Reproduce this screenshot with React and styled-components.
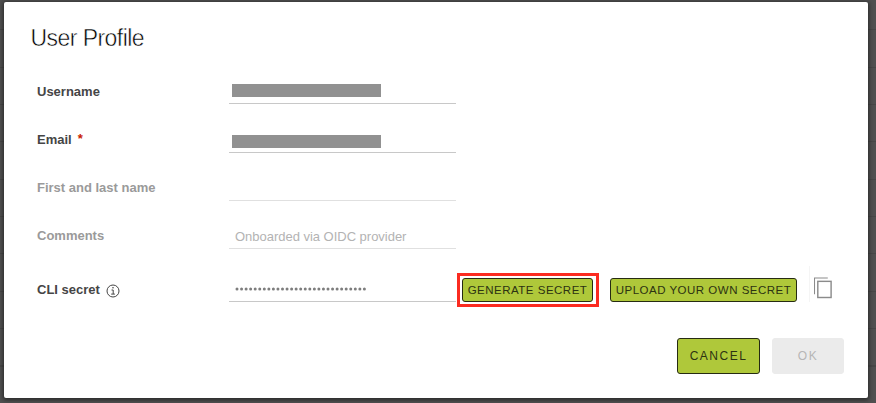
import React from "react";
import styled, { createGlobalStyle } from "styled-components";

const GlobalStyle = createGlobalStyle`
  *, *::before, *::after { box-sizing: border-box; }
  body {
    margin: 0;
    overflow: hidden;
    font-family: "Liberation Sans", Arial, Helvetica, sans-serif;
  }
`;

const Backdrop = styled.div`
  height: 403px;
  padding: 2px 8px 5px 4px;
  background: repeating-linear-gradient(
      to bottom,
      #505050 0 36.3px,
      #474747 36.3px 37.35px
    )
    0 -7px / 100% 500px;
`;

const Dialog = styled.section`
  height: 396px;
  padding: 0 24px 0 25px;
  border-radius: 2px;
  background: #fff;
  box-shadow: 0 1px 4px 1px rgba(0, 0, 0, 0.5);
`;

const Title = styled.h1`
  margin: 0;
  height: 54px;
  padding: 21px 0 0 1.5px;
  font-size: 23px;
  line-height: 30px;
  font-weight: 400;
  letter-spacing: -0.55px;
  white-space: nowrap;
  color: #000;
  -webkit-text-stroke: 0.5px #fff;
`;

const Row = styled.div`
  display: flex;
  align-items: flex-end;
  height: ${(p) => p.$height}px;
`;

const Label = styled.label`
  display: flex;
  align-items: center;
  width: 200px;
  height: 24px;
  padding-left: 8px;
  margin-bottom: ${(p) => p.$lift || 1}px;
  font-size: 13px;
  font-weight: 700;
  white-space: nowrap;
  color: ${(p) => (p.$muted ? "#9a9a9a" : "#454545")};
`;

const Required = styled.span`
  margin: -2px 0 0 6px;
  color: #c92100;
`;

const Field = styled.div`
  display: flex;
  align-items: center;
  width: 227px;
  height: 24px;
  padding: 0 6px;
  border-bottom: 1px solid ${(p) => (p.$muted ? "#e0e0e0" : "#c8c8c8")};
  font-size: 13px;
  letter-spacing: -0.02px;
  white-space: nowrap;
  color: #b3b3b3;
`;

const Redaction = styled.span`
  width: 149px;
  height: 13px;
  margin: ${(p) => p.$top}px 0 0 -3px;
  background: #919191;
`;

const Dots = styled.svg`
  display: block;
  margin-top: -2px;
`;

const InfoIcon = styled.svg`
  margin: 3px 0 0 6px;
`;

const Highlight = styled.div`
  display: flex;
  flex: none;
  width: 142px;
  height: 34px;
  margin: 0 11px -5px 1px;
  padding: 2px;
  border: 3px solid #fb2b20;
`;

const Button = styled.button`
  display: flex;
  flex: none;
  align-items: center;
  justify-content: center;
  width: ${(p) => p.$width}px;
  height: ${(p) => (p.$compact ? 24 : 36)}px;
  padding: 0;
  border: 1px solid #262b12;
  border-radius: 3px;
  background: #afc83a;
  color: #2c3212;
  font-family: inherit;
  font-size: ${(p) => (p.$compact ? 11.5 : 12)}px;
  letter-spacing: ${(p) => p.$spacing}px;
  white-space: nowrap;

  &:disabled {
    border-color: #ebebeb;
    background: #ebebeb;
    color: #b6b6b6;
  }
`;

const CopyButton = styled.button`
  display: flex;
  flex: none;
  width: 24px;
  height: 36px;
  margin-left: 12px;
  padding: 10px 0 0 4px;
  border: 0;
  border-left: 1px solid #f5f5f5;
  background: none;
`;

const Footer = styled.footer`
  display: flex;
  justify-content: flex-end;
  gap: 12px;
  margin-top: 36px;
`;

const dotCount = 29;

export default function App() {
  return (
    <>
      <GlobalStyle />
      <Backdrop>
        <Dialog>
          <Title>User Profile</Title>
          <Row $height={48}>
            <Label>Username</Label>
            <Field>
              <Redaction $top={-3} />
            </Field>
          </Row>
          <Row $height={49}>
            <Label $lift={2}>
              Email<Required>*</Required>
            </Label>
            <Field>
              <Redaction $top={1} />
            </Field>
          </Row>
          <Row $height={48}>
            <Label $muted $lift={2}>First and last name</Label>
            <Field $muted />
          </Row>
          <Row $height={48}>
            <Label $muted $lift={2}>Comments</Label>
            <Field $muted>Onboarded via OIDC provider</Field>
          </Row>
          <Row $height={53}>
            <Label>
              CLI secret
              <InfoIcon width="14" height="14" viewBox="0 0 14 14" fill="none" stroke="#454545">
                <circle cx="7" cy="7" r="6" />
                <path d="M5.5 6h1.7v4M5.2 10.1h3.7" />
                <circle cx="7" cy="3.7" r=".8" fill="#454545" stroke="none" />
              </InfoIcon>
            </Label>
            <Field>
              <Dots width="134" height="4" viewBox="0 0 134 4" fill="#7d7d7d">
                {Array.from({ length: dotCount }, (_, i) => (
                  <circle key={i} cx={2 + i * 4.55} cy="2" r="1.5" />
                ))}
              </Dots>
            </Field>
            <Highlight>
              <Button $compact $width={131} $spacing={0.5}>GENERATE SECRET</Button>
            </Highlight>
            <Button $compact $width={187} $spacing={0.5}>UPLOAD YOUR OWN SECRET</Button>
            <CopyButton aria-label="Copy">
              <svg width="20" height="24" viewBox="0 0 20 24" fill="none" stroke="#8b8b8b">
                <path d="M.5 18.5V1.5H14.5" strokeWidth="1.2" />
                <rect x="4" y="5" width="14" height="17" strokeWidth="1.5" />
              </svg>
            </CopyButton>
          </Row>
          <Footer>
            <Button $width={83} $spacing={1.5}>CANCEL</Button>
            <Button disabled $width={72} $spacing={1.5}>OK</Button>
          </Footer>
        </Dialog>
      </Backdrop>
    </>
  );
}
